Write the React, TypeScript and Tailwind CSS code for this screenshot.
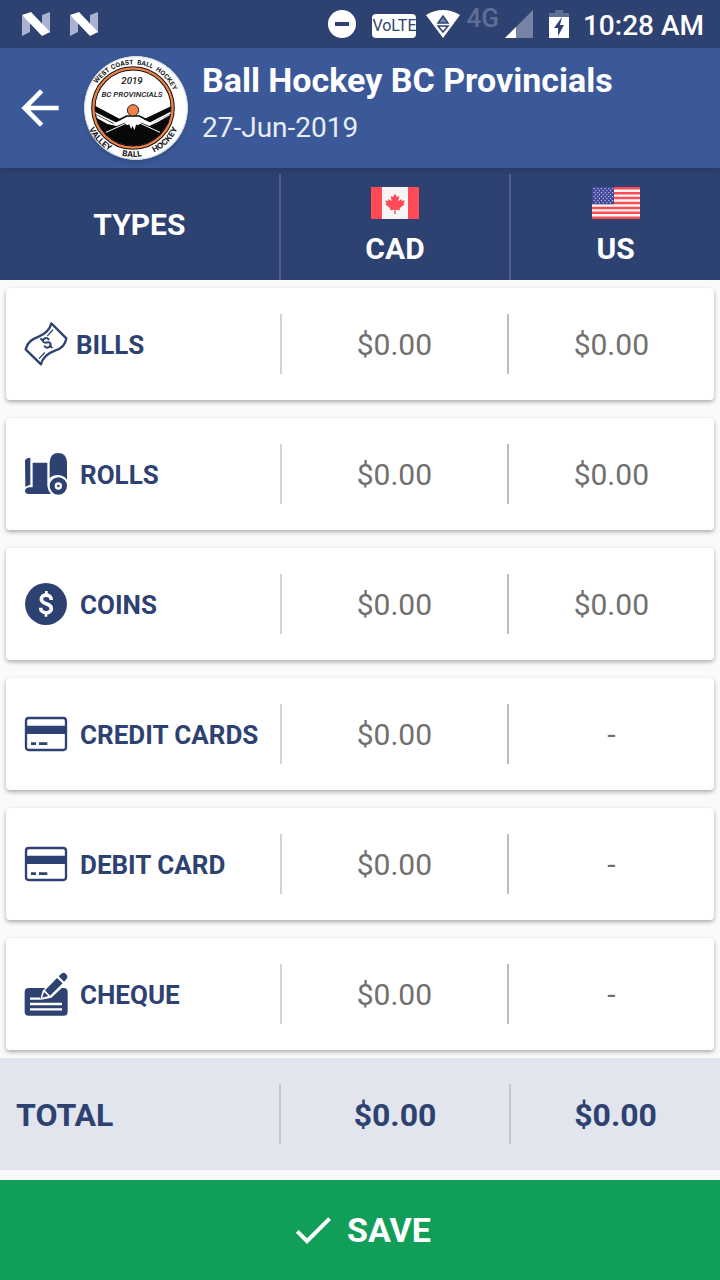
import type { ReactNode } from 'react';
import { MdArrowBack, MdCheck } from 'react-icons/md';

type Row = {
  label: string;
  icon: ReactNode;
  gap: string;
  cad: string;
  us: string;
};

function BillsIcon() {
  return (
    <svg viewBox="72 126 132 132" className="size-11 shrink-0" fill="none" stroke="currentColor" strokeLinecap="round" strokeLinejoin="round" aria-hidden="true">
      <path strokeWidth="7" d="M154 130 L199 175 C196 196 184 206 165 212 C143 220 128 230 123 253 L77 208 C82 186 96 178 116 170 C136 162 149 151 154 130Z" />
      <path strokeWidth="4" d="M158 150 L143 167 M133 219 L118 235" />
      <path strokeWidth="6" d="M146 178 C139 170 125 177 130 185 C135 193 146 182 151 190 C155 199 142 208 134 199 M123 177 L129 182 M150 196 L155 202" />
    </svg>
  );
}

function RollsIcon() {
  return (
    <svg viewBox="42 36 132 132" className="size-11 shrink-0" fill="currentColor" aria-hidden="true">
      <path d="M45 60 Q51 53 61 53 V134 Q52 136 46 141Z" />
      <path d="M68 68 H112 V137 Q113 151 123 162 H55 Q45 161 45 153 Q46 144 57 142 H68Z" />
      <path d="M119 66 Q121 39 145 39 Q169 39 171 66 V119 Q160 105 144 105 Q128 105 119 115Z" />
      <path fillRule="evenodd" d="M145 112 A26 26 0 1 1 145 164 A26 26 0 1 1 145 112Z M145 127 A11 11 0 1 0 145 149 A11 11 0 1 0 145 127Z" />
      <circle cx="145" cy="138" r="4" />
    </svg>
  );
}

function CoinsIcon() {
  return (
    <svg viewBox="42 36 132 132" className="size-11 shrink-0" aria-hidden="true">
      <circle cx="108" cy="102" r="63" fill="currentColor" />
      <path fill="none" stroke="#fff" strokeWidth="11" d="M124 90 C124 71 94 71 94 87 C94 105 124 98 124 116 C124 133 92 133 92 113" />
      <path fill="none" stroke="#fff" strokeWidth="8" d="M109 63 V78 M108 127 V140" />
    </svg>
  );
}

function CardIcon() {
  return (
    <svg viewBox="42 36 132 132" className="size-11 shrink-0" aria-hidden="true">
      <rect x="48" y="54" width="120" height="96" rx="8" fill="none" stroke="currentColor" strokeWidth="7" />
      <path fill="currentColor" d="M46 77 H170 V102 H46Z M63 127 H78 V135 H63Z M87 127 H112 V135 H87Z" />
    </svg>
  );
}

function ChequeIcon() {
  return (
    <svg viewBox="42 36 132 132" className="size-11 shrink-0" aria-hidden="true">
      <rect x="44" y="84" width="129" height="83" rx="12" fill="currentColor" />
      <path fill="none" stroke="#fff" strokeWidth="7" d="M60 116 H90 M60 132 H156 M60 148 H156" />
      <path fill="#fff" d="M90 120 L98 92 L145 43 L172 68 L124 113Z" />
      <path fill="currentColor" d="M97 113 L102 96 L115 108Z M105 91 L141 54 L158 70 L120 107Z M146 49 L154 41 Q161 35 168 42 Q176 50 169 58 L162 65Z" />
    </svg>
  );
}

function CanadaFlag() {
  return (
    <svg viewBox="0 0 144 96" className="h-8 w-12" aria-hidden="true">
      <path fill="#f5f5f5" d="M0 0H144V96H0Z" />
      <path fill="#ff4b55" d="M0 0H33V96H0Z M111 0H144V96H111Z" />
      <path fill="#ff4b55" d="M72 20 L78 30 L85 27 L82 43 L91 36 L93 42 L101 40 L98 50 L101 52 L86 64 L87 70 L74 68 V81 H70 V68 L57 70 L58 64 L43 52 L46 50 L43 40 L51 42 L53 36 L62 43 L59 27 L66 30Z" />
    </svg>
  );
}

function UsFlag() {
  const stars = [5, 11, 17, 23, 29, 35, 41, 47];
  return (
    <svg viewBox="0 0 144 96" className="h-8 w-12" aria-hidden="true">
      <path fill="#f5f5f5" d="M0 0H144V96H0Z" />
      <path stroke="#ff4b55" strokeWidth="7.4" d="M0 3.7H144 M0 18.5H144 M0 33.2H144 M0 48H144 M0 62.8H144 M0 77.5H144 M0 92.3H144" />
      <path fill="#41479b" d="M0 0H66V51.7H0Z" />
      {stars.map((y, i) => (
        <path key={y} stroke="#f5f5f5" strokeWidth="3" strokeDasharray="3 8" d={i % 2 ? `M10 ${y}H60` : `M5 ${y}H63`} />
      ))}
    </svg>
  );
}

const ringTop = [
  { word: 'WEST', at: '25.5%' },
  { word: 'COAST', at: '42%' },
  { word: 'BALL', at: '58.5%' },
  { word: 'HOCKEY', at: '77%' },
];

const ringBottom = [
  { word: 'VALLEY', at: '24%' },
  { word: 'BALL', at: '49%' },
  { word: 'HOCKEY', at: '75%' },
];

function TeamLogo() {
  return (
    <svg viewBox="12 18 312 312" className="size-26 shrink-0 rounded-full shadow-md" role="img" aria-label="Ball Hockey BC Provincials">
      <defs>
        <path id="ring-top" d="M29 174 A131 131 0 0 1 291 174" />
        <path id="ring-bottom" d="M13 174 A147 147 0 0 0 307 174" />
        <clipPath id="badge">
          <circle cx="159" cy="174" r="114" />
        </clipPath>
      </defs>
      <circle cx="168" cy="174" r="156" fill="#fff" />
      <circle cx="168" cy="174" r="154" fill="none" stroke="#d8dbe3" strokeWidth="4" />
      <circle cx="159" cy="174" r="119" fill="#fff" stroke="#111" strokeWidth="13" />
      <circle cx="159" cy="174" r="119" fill="none" stroke="#ee8248" strokeWidth="7" />
      <g clipPath="url(#badge)">
        <path fill="#080808" d="M40 165 L124 209 L100 221 L40 190Z M280 165 L191 208 L215 220 L280 188Z" />
        <path fill="#080808" d="M38 197 L82 222 L110 228 L138 217 L150 224 L159 217 L170 224 L181 217 L208 228 L235 215 L282 188 V300 H38Z" />
        <path fill="none" stroke="#fff" strokeWidth="5" d="M40 186 L112 222 M280 184 L206 222" />
        <path fill="none" stroke="#080808" strokeWidth="5" d="M118 209 L140 198 H178 L200 209" />
        <path fill="none" stroke="#fff" strokeWidth="3" d="M78 247 L143 218 M240 247 L176 218" />
        <path fill="#fff" d="M134 218 L147 211 H172 L184 218 L175 226 L169 222 L163 241 L158 227 L153 237 L148 223 L141 226Z" />
      </g>
      <circle cx="159" cy="181" r="17" fill="#ee8248" stroke="#222" strokeWidth="3" />
      <g fill="#111" textAnchor="middle">
        <g fontStyle="italic" fontFamily="'Liberation Sans Narrow', Roboto, sans-serif">
          <text x="156" y="103" fontSize="29" fontWeight="500">2019</text>
          <text x="156" y="140" fontSize="24" fontWeight="500">BC PROVINCIALS</text>
        </g>
        <g fontFamily="Inter, sans-serif" fontWeight="700">
          {ringTop.map(({ word, at }) => (
            <text key={word} fontSize="19">
              <textPath href="#ring-top" startOffset={at}>{word}</textPath>
            </text>
          ))}
          {ringBottom.map(({ word, at }) => (
            <text key={word} fontSize="24">
              <textPath href="#ring-bottom" startOffset={at}>{word}</textPath>
            </text>
          ))}
        </g>
      </g>
    </svg>
  );
}

function NougatIcon() {
  return (
    <svg viewBox="0 0 28 24" className="h-6 w-7" aria-hidden="true">
      <path fill="#a9b3cf" d="M0 3 L8 10 V20 L0 24Z M20 3 L28 0 V21 L20 14Z" />
      <path fill="#fff" d="M0 3 L9 0 L28 20 L20 24Z" />
    </svg>
  );
}

function StatusBar() {
  return (
    <div className="flex h-12 items-center justify-between bg-[#2e4272] pr-4 pl-[22px] text-white">
      <div className="flex gap-5">
        <NougatIcon />
        <NougatIcon />
      </div>
      <div className="flex items-center">
        <svg viewBox="0 0 28 28" className="size-7" aria-hidden="true">
          <circle cx="14" cy="14" r="14" fill="#fff" />
          <path fill="#2e4272" d="M7 12H21V16H7Z" />
        </svg>
        <span className="mt-1 ml-4 flex h-6 w-11 items-center justify-center rounded-sm bg-white font-['Liberation_Sans_Narrow',Roboto,sans-serif] text-base text-[#2e4272]">
          VoLTE
        </span>
        <svg viewBox="0 0 34 28" className="ml-2.5 h-7 w-[34px]" aria-hidden="true">
          <path fill="#fff" d="M0 5 Q17 -5 34 5 L17 28Z" />
          <path fill="#7583a8" stroke="#2e4272" strokeWidth="1.5" d="M17 6 L22 13 H12Z" />
          <path fill="#fff" stroke="#2e4272" strokeWidth="1.5" d="M12 16 H22 L17 22Z" />
        </svg>
        <span className="mb-3 ml-1.5 text-[26px] leading-6 font-medium text-[#5f6e95]">4G</span>
        <svg viewBox="0 0 28 28" className="ml-1.5 size-7" aria-hidden="true">
          <path fill="#7683a5" d="M28 0 V28 H0Z" />
          <path fill="#fff" d="M11 17 V28 H0Z" />
        </svg>
        <svg viewBox="0 0 20 28" className="ml-4 h-7 w-5" aria-hidden="true">
          <path fill="#5f6e95" d="M6 0 H14 V3 H20 V7 H0 V3 H6Z" />
          <path fill="#fff" d="M0 7 H20 V28 H0Z" />
          <path fill="#2e4272" d="M13 7 L5 18 H9 V26 L15 15 H11Z" />
        </svg>
        <span className="ml-3.5 pt-1 text-[28px] leading-8 font-medium">10:28 AM</span>
      </div>
    </div>
  );
}

const rows: Row[] = [
  { label: 'BILLS', icon: <BillsIcon />, gap: 'gap-2', cad: '$0.00', us: '$0.00' },
  { label: 'ROLLS', icon: <RollsIcon />, gap: 'gap-3', cad: '$0.00', us: '$0.00' },
  { label: 'COINS', icon: <CoinsIcon />, gap: 'gap-3', cad: '$0.00', us: '$0.00' },
  { label: 'CREDIT CARDS', icon: <CardIcon />, gap: 'gap-3', cad: '$0.00', us: '-' },
  { label: 'DEBIT CARD', icon: <CardIcon />, gap: 'gap-3', cad: '$0.00', us: '-' },
  { label: 'CHEQUE', icon: <ChequeIcon />, gap: 'gap-3', cad: '$0.00', us: '-' },
];

export default function App() {
  return (
    <div className="flex min-h-screen flex-col bg-[#fafafa] font-[Roboto,sans-serif]">
      <StatusBar />

      <header className="relative z-10 flex h-30 items-center bg-[#3b5998] pl-3 text-white shadow-md">
        <button type="button" aria-label="Back" className="shrink-0">
          <MdArrowBack className="size-14" />
        </button>
        <div className="ml-4">
          <TeamLogo />
        </div>
        <div className="ml-3.5">
          <h1 className="text-[34px] leading-10 font-bold">Ball Hockey BC Provincials</h1>
          <p className="py-1.5 text-[28px] leading-11 text-[#e8ecf5]">27-Jun-2019</p>
        </div>
      </header>

      <table className="block w-full">
        <thead className="block bg-[#2e4272] pt-1.5 text-white">
          <tr className="grid h-[106px] grid-cols-[39fr_32fr_29fr] text-3xl leading-9 font-bold">
            <th scope="col" className="flex items-center justify-center border-r-2 border-[#4f608a] pb-1">TYPES</th>
            <th scope="col" className="flex flex-col items-center justify-center gap-3 border-r-2 border-[#4f608a]">
              <CanadaFlag />
              CAD
            </th>
            <th scope="col" className="flex flex-col items-center justify-center gap-3">
              <UsFlag />
              US
            </th>
          </tr>
        </thead>

        <tbody className="flex flex-col gap-[18px] px-1.5 py-2">
          {rows.map((row) => (
            <tr
              key={row.label}
              className="grid h-28 grid-cols-[39fr_32fr_29fr] rounded-sm bg-white py-[26px] text-3xl text-[#707070] shadow-[0_2px_4px_rgba(0,0,0,0.32)]"
            >
              <th scope="row" className={`flex items-center border-r-2 border-[#d3d3d3] pl-[18px] text-left text-[26px] whitespace-nowrap text-[#2e4272] ${row.gap}`}>
                {row.icon}
                <span className="pt-1">{row.label}</span>
              </th>
              <td className="flex items-center justify-center border-r-2 border-[#bdbdbd] pt-0.5">{row.cad}</td>
              <td className="flex items-center justify-center pt-0.5">{row.us}</td>
            </tr>
          ))}
        </tbody>

        <tfoot className="block bg-[#e2e5ee] py-[26px] text-[#2e4272]">
          <tr className="grid h-15 grid-cols-[39fr_32fr_29fr] text-[32px] font-bold">
            <th scope="row" className="flex items-center border-r-2 border-[#c4c6cd] pt-0.5 pl-4">TOTAL</th>
            <td className="flex items-center justify-center border-r-2 border-[#c4c6cd] pt-0.5">$0.00</td>
            <td className="flex items-center justify-center pt-0.5">$0.00</td>
          </tr>
        </tfoot>
      </table>

      <button type="button" className="mt-2.5 flex h-25 items-center justify-center gap-2.5 bg-[#119e59] text-[34px] font-bold text-white">
        <MdCheck className="size-12" />
        SAVE
      </button>
    </div>
  );
}
